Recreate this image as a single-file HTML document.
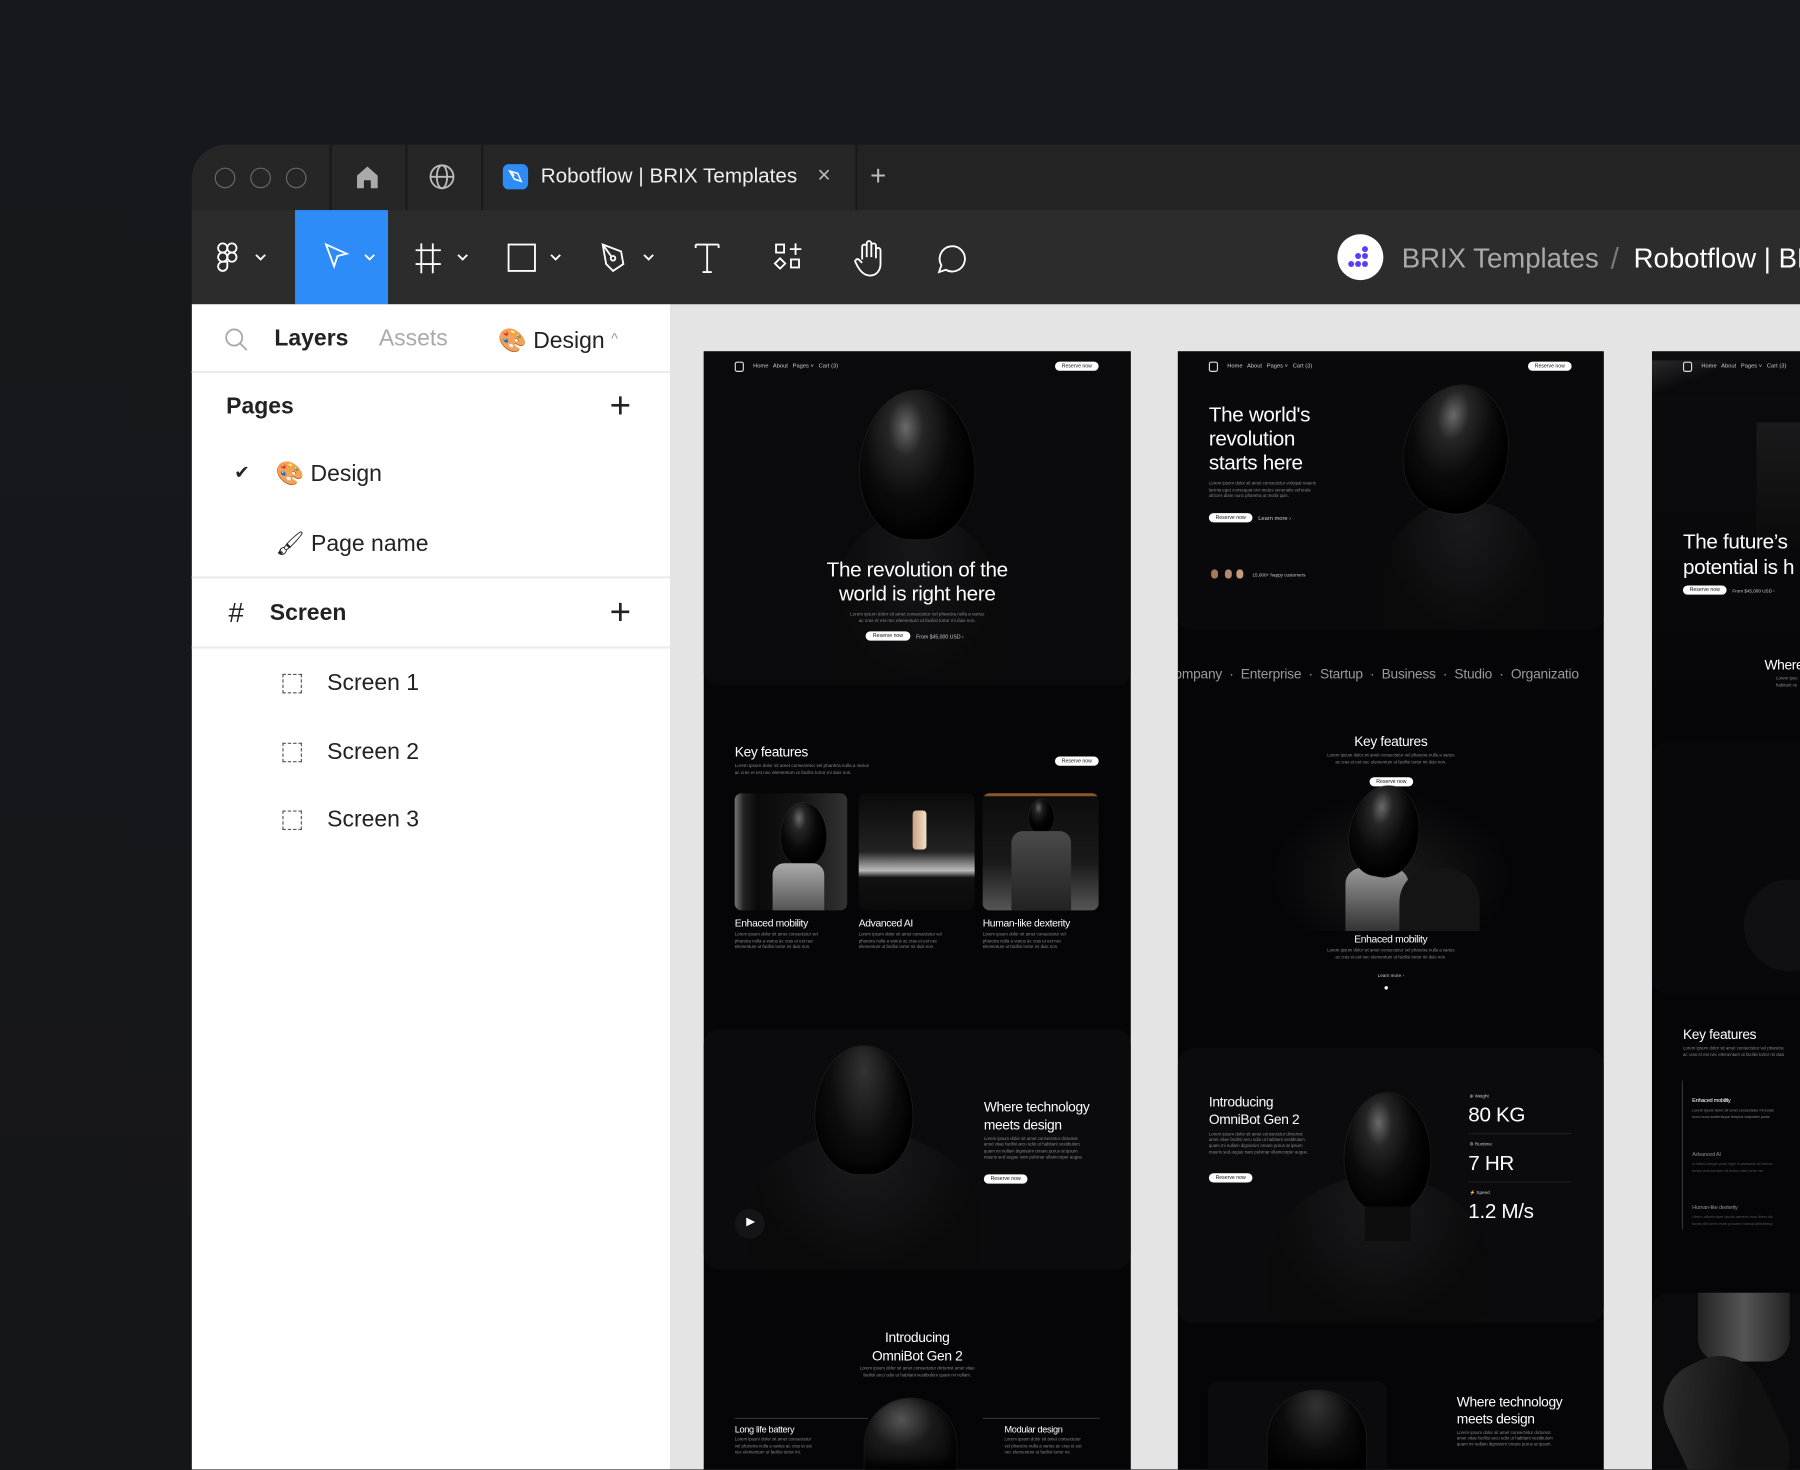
<!DOCTYPE html>
<html><head><meta charset="utf-8"><style>
*{margin:0;padding:0;box-sizing:border-box}
html,body{width:1800px;height:1470px;overflow:hidden;background:#16171b}
body{font-family:"Liberation Sans",sans-serif}
#w{position:absolute;left:0;top:0;width:1568px;height:1280px;transform:scale(1.148);transform-origin:0 0;background:linear-gradient(180deg,#17181d,#15161a);overflow:hidden}
.a{position:absolute}
.t{position:absolute;white-space:nowrap}
.fr{position:absolute;background:#050507;overflow:hidden}
.nav{position:absolute;font-size:5px;color:#ccc}
.btn{position:absolute;background:#fff;color:#111;border-radius:6px;font-size:4.5px;text-align:center;line-height:8px;height:8px}
.h{color:#fff;position:absolute;white-space:nowrap;letter-spacing:-.3px}
.l{color:#888;font-size:4px;line-height:5.5px;position:absolute;white-space:nowrap}
.head{position:absolute;border-radius:50% 50% 45% 45%/55% 55% 45% 45%;background:radial-gradient(ellipse at 40% 25%,#6a6a6a 0,#262626 18%,#0b0b0b 45%,#000 80%);box-shadow:inset -4px -6px 10px #000,0 0 1px #555}
.body{position:absolute;border-radius:50% 50% 10% 10%/60% 60% 10% 10%;background:radial-gradient(ellipse at 50% 20%,#1a1a1c,#0a0a0b 70%)}
</style></head><body><div id="w">

<div class="a" style="left:167px;top:126px;width:1401px;height:1154px;border-radius:30px 0 0 0;background:#252525;overflow:hidden">
  <div class="a" style="left:0;top:0;width:1401px;height:57px;background:#232323"></div>
  <div class="a" style="left:0;top:0;width:580px;height:57px;background:#262626"></div>
  <div class="a" style="left:20px;top:20px;width:18px;height:18px;border:1.5px solid #6a6a6a;border-radius:50%"></div>
  <div class="a" style="left:51px;top:20px;width:18px;height:18px;border:1.5px solid #6a6a6a;border-radius:50%"></div>
  <div class="a" style="left:82px;top:20px;width:18px;height:18px;border:1.5px solid #6a6a6a;border-radius:50%"></div>
  <div class="a" style="left:120px;top:0;width:2px;height:57px;background:#1a1a1a"></div>
  <div class="a" style="left:186px;top:0;width:2px;height:57px;background:#1a1a1a"></div>
  <div class="a" style="left:252px;top:0;width:2px;height:57px;background:#1a1a1a"></div>
  <div class="a" style="left:578px;top:0;width:2px;height:57px;background:#1a1a1a"></div>
  <svg class="a" style="left:142px;top:17px" width="22" height="22" viewBox="0 0 22 22"><path d="M2 10 L11 2 L20 10 V21 H14 V14 H8 V21 H2Z" fill="#aaa"/></svg>
  <svg class="a" style="left:206px;top:16px" width="24" height="24" viewBox="0 0 24 24" fill="none" stroke="#bbb" stroke-width="1.6"><circle cx="12" cy="12" r="10"/><ellipse cx="12" cy="12" rx="4.5" ry="10"/><path d="M2 12H22"/></svg>
  <div class="a" style="left:271px;top:17px;width:22px;height:22px;border-radius:5px;background:#2d8cf7"></div>
  <svg class="a" style="left:275px;top:21px" width="14" height="14" viewBox="0 0 14 14" fill="none" stroke="#fff" stroke-width="1.3"><path d="M2 2 L9 4 L12 11 L6 9Z M2 2 L6 6"/></svg>
  <div class="t" style="left:304px;top:17px;font-size:18px;color:#eee">Robotflow | BRIX Templates</div>
  <div class="t" style="left:545px;top:16px;font-size:20px;color:#bbb">×</div>
  <div class="t" style="left:591px;top:14px;font-size:24px;color:#bbb;font-weight:300">+</div>
  <div class="a" style="left:0;top:57px;width:1401px;height:82px;background:#2c2c2c"></div>
  <div class="a" style="left:90px;top:57px;width:81px;height:82px;background:#2d8cf7"></div>
  <svg class="a" style="left:20px;top:84px" width="60" height="30" viewBox="0 0 60 30" fill="none" stroke="#fff" stroke-width="1.6"><rect x="3" y="2" width="8" height="8" rx="4"/><rect x="11" y="2" width="8" height="8" rx="4"/><rect x="3" y="10" width="8" height="8" rx="4"/><circle cx="15" cy="14" r="4"/><path d="M3 22a4 4 0 1 0 8 0v-4H7a4 4 0 0 0-4 4z"/><path d="M36 12l4 4 4-4"/></svg>
  <svg class="a" style="left:114px;top:84px" width="52" height="30" viewBox="0 0 52 30" fill="none" stroke="#fff" stroke-width="1.6"><path d="M3 3 L21 11 L13 13 L10 22Z"/><path d="M37 12l4 4 4-4"/></svg>
  <svg class="a" style="left:193px;top:84px" width="54" height="30" viewBox="0 0 54 30" fill="none" stroke="#fff" stroke-width="1.6"><path d="M7 2V28M17 2V28M2 8H24M2 20H24"/><path d="M39 12l4 4 4-4"/></svg>
  <svg class="a" style="left:274px;top:84px" width="54" height="30" viewBox="0 0 54 30" fill="none" stroke="#fff" stroke-width="1.6"><rect x="2" y="3" width="23" height="23"/><path d="M39 12l4 4 4-4"/></svg>
  <svg class="a" style="left:355px;top:84px" width="54" height="30" viewBox="0 0 54 30" fill="none" stroke="#fff" stroke-width="1.6"><path d="M3 3 L19 9 L21 20 L12 26 L6 20Z M3 3 L11 14"/><circle cx="12" cy="15" r="2"/><path d="M39 12l4 4 4-4"/></svg>
  <svg class="a" style="left:437px;top:84px" width="26" height="30" viewBox="0 0 26 30" fill="none" stroke="#fff" stroke-width="1.6"><path d="M2 3H22M12 3V27M8 27H16M2 3V6M22 3V6"/></svg>
  <svg class="a" style="left:506px;top:84px" width="30" height="30" viewBox="0 0 30 30" fill="none" stroke="#fff" stroke-width="1.6"><rect x="3" y="3" width="7" height="7"/><path d="M20 2V12M15 7H25"/><path d="M6.5 15L11 19.5L6.5 24L2 19.5Z"/><rect x="16" y="16" width="7" height="7"/></svg>
  <svg class="a" style="left:575px;top:82px" width="32" height="34" viewBox="0 0 32 34" fill="none" stroke="#fff" stroke-width="1.6"><path d="M9 18V7a2 2 0 0 1 4 0v9V4a2 2 0 0 1 4 0v12V6a2 2 0 0 1 4 0v11V10a2 2 0 0 1 4 0v12c0 6-4 10-9 10s-8-3-11-8l-2-4a2 2 0 0 1 3-2l3 3"/></svg>
  <svg class="a" style="left:646px;top:85px" width="30" height="30" viewBox="0 0 30 30" fill="none" stroke="#fff" stroke-width="1.6"><path d="M5 26 L7 20 A11 11 0 1 1 11 24Z"/></svg>
  <div class="a" style="left:998px;top:78px;width:40px;height:40px;border-radius:50%;background:#fff"></div>
  <svg class="a" style="left:1006px;top:86px" width="24" height="24" viewBox="0 0 24 24" fill="#5b3ff6"><circle cx="16" cy="5" r="2.6"/><circle cx="10" cy="11" r="2.6"/><circle cx="16" cy="11" r="2.6"/><circle cx="4" cy="18" r="2.6"/><circle cx="10" cy="18" r="2.6"/><circle cx="16" cy="18" r="2.6"/></svg>
  <div class="t" style="left:1054px;top:86px;font-size:24px;color:#aaa">BRIX Templates</div>
  <div class="t" style="left:1236px;top:84px;font-size:26px;color:#777">/</div>
  <div class="t" style="left:1256px;top:86px;font-size:24px;color:#fff">Robotflow | BRIX</div>
  <div class="a" style="left:0;top:139px;width:417px;height:1015px;background:#fff"></div>
  <div class="a" style="left:417px;top:139px;width:984px;height:1015px;background:#e4e4e4"></div>
</div>

<svg class="a" style="left:195px;top:285px" width="22" height="22" viewBox="0 0 22 22" fill="none" stroke="#aaa" stroke-width="1.6"><circle cx="9" cy="9" r="7"/><path d="M14 14L20 20"/></svg>
<div class="t" style="left:239px;top:284px;font-size:20px;font-weight:bold;color:#222">Layers</div>
<div class="t" style="left:330px;top:284px;font-size:20px;color:#aaa">Assets</div>
<div class="t" style="left:434px;top:284px;font-size:20px;color:#222">🎨 Design <span style="font-size:13px;color:#999;vertical-align:4px">^</span></div>
<div class="a" style="left:167px;top:323px;width:417px;height:2px;background:#ececec"></div>
<div class="t" style="left:197px;top:343px;font-size:20px;font-weight:bold;color:#222">Pages</div>
<div class="t" style="left:531px;top:335px;font-size:32px;font-weight:300;color:#222">+</div>
<div class="t" style="left:204px;top:402px;font-size:16px;color:#222">✔</div>
<div class="t" style="left:240px;top:400px;font-size:20px;color:#222">🎨 Design</div>
<div class="t" style="left:240px;top:461px;font-size:20px;color:#222">🖌 Page name</div>
<div class="a" style="left:167px;top:502px;width:417px;height:2px;background:#ececec"></div>
<div class="t" style="left:199px;top:521px;font-size:24px;color:#222">#</div>
<div class="t" style="left:235px;top:523px;font-size:20px;font-weight:bold;color:#222">Screen</div>
<div class="t" style="left:531px;top:515px;font-size:32px;font-weight:300;color:#222">+</div>
<div class="a" style="left:167px;top:563px;width:417px;height:2px;background:#ececec"></div>
<div class="a" style="left:246px;top:587px;width:17px;height:17px;border:1.5px dashed #555"></div>
<div class="t" style="left:285px;top:584px;font-size:20px;color:#222">Screen 1</div>
<div class="a" style="left:246px;top:647px;width:17px;height:17px;border:1.5px dashed #555"></div>
<div class="t" style="left:285px;top:644px;font-size:20px;color:#222">Screen 2</div>
<div class="a" style="left:246px;top:706px;width:17px;height:17px;border:1.5px dashed #555"></div>
<div class="t" style="left:285px;top:703px;font-size:20px;color:#222">Screen 3</div>

<!-- FRAME 1 -->
<div class="fr" style="left:613px;top:306px;width:372px;height:974px">
  <div class="a" style="left:0;top:0;width:372px;height:291px;background:#0a0a0c;border-radius:0 0 12px 12px"></div>
  <div class="a" style="left:27px;top:9px;width:8px;height:9px;border:1px solid #ddd;border-radius:2px"></div>
  <div class="nav" style="left:43px;top:10px">Home &nbsp; About &nbsp; Pages ˅ &nbsp; Cart (3)</div>
  <div class="btn" style="left:306px;top:9px;width:38px">Reserve now</div>
  <div class="body" style="left:110px;top:140px;width:150px;height:150px;opacity:.8"></div>
  <div class="head" style="left:136px;top:34px;width:100px;height:130px"></div>
  <div class="h" style="left:0;width:372px;text-align:center;top:180px;font-size:18px;line-height:21px">The revolution of the<br>world is right here</div>
  <div class="l" style="left:0;width:372px;text-align:center;top:226px">Lorem ipsum dolor sit amet consectetur vel pharetra nulla a varius<br>ac cras et est nec elementum ut facilisi tortor mi duis non.</div>
  <div class="btn" style="left:141px;top:244px;width:39px">Reserve now</div>
  <div class="nav" style="left:185px;top:246px;font-size:4.5px">From $45,000 USD ›</div>

  <div class="h" style="left:27px;top:342px;font-size:12px">Key features</div>
  <div class="l" style="left:27px;top:358px">Lorem ipsum dolor sit amet consectetur vel pharetra nulla a varius<br>ac cras et est nec elementum ut facilisi tortor mi duis non.</div>
  <div class="btn" style="left:306px;top:353px;width:38px">Reserve now</div>
  <div class="a" style="left:27px;top:385px;width:98px;height:102px;border-radius:6px;background:linear-gradient(90deg,#777 0,#222 8%,#0a0a0a 20%,#151515 60%,#333 100%)"></div>
  <div class="head" style="left:67px;top:393px;width:40px;height:55px"></div>
  <div class="a" style="left:60px;top:446px;width:45px;height:41px;border-radius:10px 10px 0 0;background:linear-gradient(180deg,#aaa,#555)"></div>
  <div class="a" style="left:135px;top:385px;width:101px;height:102px;border-radius:6px;background:linear-gradient(180deg,#0a0a0a 0,#222 50%,#bbb 66%,#111 72%,#0a0a0a 100%)"></div>
  <div class="a" style="left:182px;top:400px;width:12px;height:34px;border-radius:3px;background:linear-gradient(90deg,#c9a27f,#f2e0cc)"></div>
  <div class="a" style="left:243px;top:385px;width:101px;height:102px;border-radius:6px;background:linear-gradient(180deg,#8a5a30 0,#8a5a30 2%,#0c0c0c 3%,#1a1a1a 60%,#555 100%)"></div>
  <div class="head" style="left:283px;top:390px;width:22px;height:30px"></div>
  <div class="a" style="left:268px;top:418px;width:52px;height:69px;border-radius:10px 10px 0 0;background:linear-gradient(180deg,#4a4a4a,#222)"></div>
  <div class="h" style="left:27px;top:493px;font-size:9px">Enhaced mobility</div>
  <div class="h" style="left:135px;top:493px;font-size:9px">Advanced AI</div>
  <div class="h" style="left:243px;top:493px;font-size:9px">Human-like dexterity</div>
  <div class="l" style="left:27px;top:506px;font-size:3.8px">Lorem ipsum dolor sit amet consectetur vel<br>pharetra nulla a varius ac cras et est nec<br>elementum ut facilisi tortor mi duis non.</div>
  <div class="l" style="left:135px;top:506px;font-size:3.8px">Lorem ipsum dolor sit amet consectetur vel<br>pharetra nulla a varius ac cras et est nec<br>elementum ut facilisi tortor mi duis non.</div>
  <div class="l" style="left:243px;top:506px;font-size:3.8px">Lorem ipsum dolor sit amet consectetur vel<br>pharetra nulla a varius ac cras et est nec<br>elementum ut facilisi tortor mi duis non.</div>

  <div class="a" style="left:0;top:590px;width:372px;height:210px;background:#0b0b0d;border-radius:14px"></div>
  <div class="body" style="left:40px;top:680px;width:200px;height:120px"></div>
  <div class="head" style="left:97px;top:605px;width:85px;height:112px;background:radial-gradient(ellipse at 50% 20%,#333,#0c0c0c 50%,#000)"></div>
  <div class="a" style="left:27px;top:747px;width:26px;height:26px;border-radius:50%;background:#151517"></div>
  <div class="t" style="left:37px;top:753px;font-size:10px;color:#fff">▶</div>
  <div class="h" style="left:244px;top:650px;font-size:12px;line-height:16px">Where technology<br>meets design</div>
  <div class="l" style="left:244px;top:684px;font-size:3.8px;line-height:5.3px">Lorem ipsum dolor sit amet consectetur dictumst<br>amet vitae facilisi arcu odio ut habitant vestibulum<br>quam mi nullam dignissim ornare purus at ipsum<br>mauris sed augue nam pulvinar ullamcorper augue.</div>
  <div class="btn" style="left:244px;top:717px;width:38px">Reserve now</div>

  <div class="h" style="left:0;width:372px;text-align:center;top:851px;font-size:12px;line-height:16px">Introducing<br>OmniBot Gen 2</div>
  <div class="l" style="left:0;width:372px;text-align:center;top:884px;font-size:3.8px">Lorem ipsum dolor sit amet consectetur dictumst amet vitae<br>facilisi arcu odio ut habitant vestibulum quam mi nullam.</div>
  <div class="a" style="left:27px;top:929px;width:116px;height:1px;background:#333"></div>
  <div class="a" style="left:243px;top:929px;width:102px;height:1px;background:#333"></div>
  <div class="h" style="left:27px;top:935px;font-size:8px">Long life battery</div>
  <div class="h" style="left:262px;top:935px;font-size:8px">Modular design</div>
  <div class="l" style="left:27px;top:946px;font-size:3.8px">Lorem ipsum dolor sit amet consectetur<br>vel pharetra nulla a varius ac cras et est<br>nec elementum ut facilisi tortor mi.</div>
  <div class="l" style="left:262px;top:946px;font-size:3.8px">Lorem ipsum dolor sit amet consectetur<br>vel pharetra nulla a varius ac cras et est<br>nec elementum ut facilisi tortor mi.</div>
  <div class="head" style="left:140px;top:912px;width:80px;height:62px;border-radius:40px 40px 0 0;background:radial-gradient(ellipse at 40% 30%,#555,#1a1a1a 40%,#050505)"></div>
</div>

<!-- FRAME 2 -->
<div class="fr" style="left:1026px;top:306px;width:371px;height:974px">
  <div class="a" style="left:0;top:0;width:371px;height:243px;background:#09090b;border-radius:0 0 12px 12px"></div>
  <div class="a" style="left:27px;top:9px;width:8px;height:9px;border:1px solid #ddd;border-radius:2px"></div>
  <div class="nav" style="left:43px;top:10px">Home &nbsp; About &nbsp; Pages ˅ &nbsp; Cart (3)</div>
  <div class="btn" style="left:305px;top:9px;width:38px">Reserve now</div>
  <div class="body" style="left:180px;top:130px;width:140px;height:113px"></div>
  <div class="head" style="left:198px;top:29px;width:90px;height:112px;transform:rotate(12deg)"></div>
  <div class="h" style="left:27px;top:45px;font-size:18px;line-height:21px">The world's<br>revolution<br>starts here</div>
  <div class="l" style="left:27px;top:113px;font-size:3.8px;line-height:5.5px">Lorem ipsum dolor sit amet consectetur volutpat mauris<br>lacinia eget consequat orci metus venenatis vehicula<br>ultrices diam nunc pharetra ut morbi quis.</div>
  <div class="btn" style="left:27px;top:141px;width:38px">Reserve now</div>
  <div class="nav" style="left:70px;top:143px">Learn more ›</div>
  <div class="a" style="left:29px;top:190px;width:6px;height:8px;border-radius:3px;background:#a57a5a"></div>
  <div class="a" style="left:41px;top:190px;width:6px;height:8px;border-radius:3px;background:#b58a6a"></div>
  <div class="a" style="left:51px;top:190px;width:6px;height:8px;border-radius:3px;background:#c49a7a"></div>
  <div class="nav" style="left:65px;top:192px;font-size:4px">15,000+ happy customers</div>
  <div class="t" style="left:-3px;top:274px;font-size:12px;color:#999;letter-spacing:-.2px">ompany &nbsp;·&nbsp; Enterprise &nbsp;·&nbsp; Startup &nbsp;·&nbsp; Business &nbsp;·&nbsp; Studio &nbsp;·&nbsp; Organizatio</div>

  <div class="h" style="left:0;width:371px;text-align:center;top:333px;font-size:12px">Key features</div>
  <div class="l" style="left:0;width:371px;text-align:center;top:350px;font-size:3.8px">Lorem ipsum dolor sit amet consectetur vel pharetra nulla a varius<br>ac cras et est nec elementum ut facilisi tortor mi duis non.</div>
  <div class="btn" style="left:167px;top:371px;width:38px">Reserve now</div>
  <div class="a" style="left:80px;top:385px;width:210px;height:120px;background:radial-gradient(ellipse at 50% 60%,#1a1a1a,#050507 70%)"></div>
  <div class="a" style="left:146px;top:450px;width:55px;height:55px;border-radius:14px 14px 0 0;background:linear-gradient(180deg,#999,#333)"></div>
  <div class="a" style="left:193px;top:450px;width:70px;height:55px;border-radius:30px 30px 0 0;background:#141414"></div>
  <div class="head" style="left:150px;top:378px;width:60px;height:80px;transform:rotate(10deg)"></div>
  <div class="h" style="left:0;width:371px;text-align:center;top:507px;font-size:9px">Enhaced mobility</div>
  <div class="l" style="left:0;width:371px;text-align:center;top:520px;font-size:3.8px">Lorem ipsum dolor sit amet consectetur vel pharetra nulla a varius<br>ac cras et est nec elementum ut facilisi tortor mi duis non.</div>
  <div class="nav" style="left:0;width:371px;text-align:center;top:541px;font-size:4px">Learn more ›</div>
  <div class="a" style="left:180px;top:553px;width:3px;height:3px;border-radius:50%;background:#fff"></div>

  <div class="a" style="left:0;top:607px;width:371px;height:240px;background:#0b0b0d;border-radius:14px"></div>
  <div class="body" style="left:80px;top:718px;width:190px;height:129px"></div>
  <div class="head" style="left:145px;top:646px;width:75px;height:105px"></div>
  <div class="a" style="left:163px;top:745px;width:40px;height:30px;background:#0d0d0d"></div>
  <div class="h" style="left:27px;top:647px;font-size:12px;line-height:15px">Introducing<br>OmniBot Gen 2</div>
  <div class="l" style="left:27px;top:680px;font-size:3.8px;line-height:5.2px">Lorem ipsum dolor sit amet consectetur dictumst<br>amet vitae facilisi arcu odio ut habitant vestibulum<br>quam mi nullam dignissim ornare purus at ipsum<br>mauris sed augue nam pulvinar ullamcorper augue.</div>
  <div class="btn" style="left:27px;top:716px;width:38px">Reserve now</div>
  <div class="nav" style="left:254px;top:646px;font-size:4px">⊕ Weight</div>
  <div class="h" style="left:253px;top:655px;font-size:18px">80 KG</div>
  <div class="a" style="left:253px;top:681px;width:90px;height:1px;background:#1e1e1e"></div>
  <div class="nav" style="left:254px;top:688px;font-size:4px">⚙ Runtime</div>
  <div class="h" style="left:253px;top:697px;font-size:18px">7 HR</div>
  <div class="a" style="left:253px;top:723px;width:90px;height:1px;background:#1e1e1e"></div>
  <div class="nav" style="left:254px;top:730px;font-size:4px">⚡ Speed</div>
  <div class="h" style="left:253px;top:739px;font-size:18px">1.2 M/s</div>

  <div class="a" style="left:26px;top:897px;width:156px;height:77px;background:#0b0b0d;border-radius:8px 8px 0 0"></div>
  <div class="head" style="left:78px;top:905px;width:86px;height:69px;border-radius:43px 43px 0 0;background:radial-gradient(ellipse at 50% 20%,#333,#0c0c0c 50%,#000)"></div>
  <div class="h" style="left:243px;top:908px;font-size:12px;line-height:15px">Where technology<br>meets design</div>
  <div class="l" style="left:243px;top:940px;font-size:3.8px;line-height:5.2px">Lorem ipsum dolor sit amet consectetur dictumst<br>amet vitae facilisi arcu odio ut habitant vestibulum<br>quam mi nullam dignissim ornare purus at ipsum.</div>
</div>

<!-- FRAME 3 -->
<div class="fr" style="left:1439px;top:306px;width:129px;height:974px">
  <div class="a" style="left:0;top:0;width:129px;height:320px;background:linear-gradient(180deg,#0c0c0e,#060608)"></div>
  <div class="a" style="left:0;top:8px;width:129px;height:30px;background:linear-gradient(160deg,#2a2a2c 0,#0a0a0c 40%)"></div>
  <div class="a" style="left:91px;top:62px;width:38px;height:110px;background:linear-gradient(180deg,#1a1a1c,#0a0a0a)"></div>
  <div class="a" style="left:27px;top:9px;width:8px;height:9px;border:1px solid #ddd;border-radius:2px"></div>
  <div class="nav" style="left:43px;top:10px">Home &nbsp; About &nbsp; Pages ˅ &nbsp; Cart (3)</div>
  <div class="h" style="left:27px;top:155px;font-size:18px;line-height:22px">The future’s<br>potential is h</div>
  <div class="btn" style="left:27px;top:204px;width:38px">Reserve now</div>
  <div class="nav" style="left:70px;top:206px;font-size:4px">From $45,000 USD ›</div>
  <div class="h" style="left:98px;top:266px;font-size:12px">Where</div>
  <div class="l" style="left:108px;top:283px;font-size:3.8px">Lorem ipsu<br>habitant ve</div>
  <div class="a" style="left:0;top:340px;width:129px;height:220px;background:#08080a;border-radius:14px 0 0 14px;overflow:hidden"><div class="a" style="left:80px;top:120px;width:80px;height:80px;border-radius:50%;background:#101012"></div></div>
  <div class="h" style="left:27px;top:588px;font-size:12px">Key features</div>
  <div class="l" style="left:27px;top:605px;font-size:3.8px">Lorem ipsum dolor sit amet consectetur vel pharetra<br>ac cras et est nec elementum ut facilisi tortor mi duis</div>
  <div class="a" style="left:26px;top:635px;width:1px;height:130px;background:#333"></div>
  <div class="h" style="left:35px;top:650px;font-size:5px">Enhaced mobility</div>
  <div class="l" style="left:35px;top:659px;font-size:3.3px">Lorem ipsum dolor sit amet consectetur mi turpis<br>nunc nunc scelerisque tempus vulputate porta.</div>
  <div class="h" style="left:35px;top:697px;font-size:5px;color:#888">Advanced AI</div>
  <div class="l" style="left:35px;top:706px;font-size:3.3px;color:#555">In tellus integer proin eget in praesent at viverra<br>lectus erat semper sit lectus odio tortor vel.</div>
  <div class="h" style="left:35px;top:743px;font-size:5px;color:#888">Human-like dexterity</div>
  <div class="l" style="left:35px;top:752px;font-size:3.3px;color:#555">Libero ullamcorper iaculis aenean mus libero dic<br>turpis elit lorem enim posuere massa pellentesq</div>
  <div class="a" style="left:0;top:820px;width:129px;height:154px;background:#0a0a0c;border-radius:14px 0 0 0;overflow:hidden">
    <div class="a" style="left:40px;top:0;width:80px;height:60px;border-radius:0 0 20px 20px;background:linear-gradient(90deg,#222,#555,#222)"></div>
    <div class="a" style="left:20px;top:55px;width:90px;height:130px;border-radius:40px;background:linear-gradient(120deg,#333,#111 60%);transform:rotate(-25deg)"></div>
  </div>
</div>

</div></body></html>
